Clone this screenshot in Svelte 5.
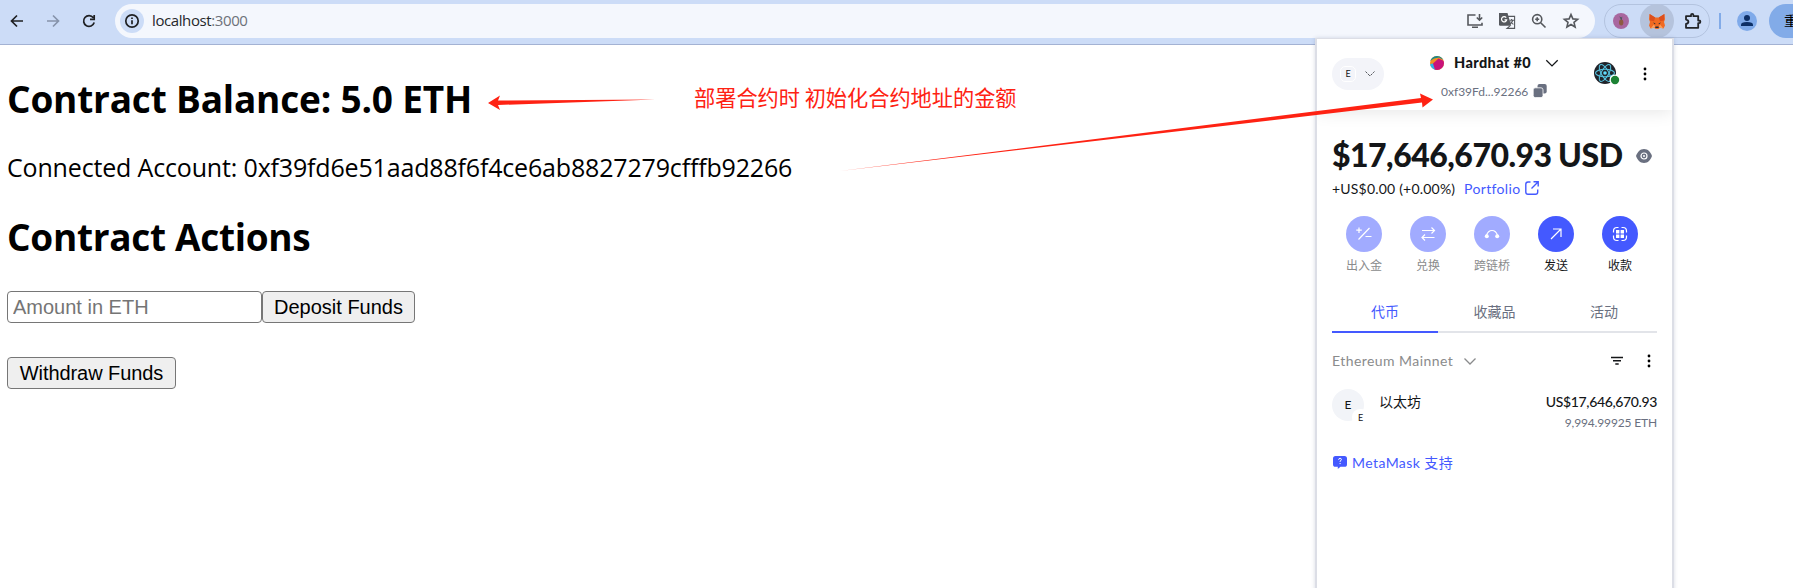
<script>
  const actions = [
    { id: 'fund', label: '出入金', off: true },
    { id: 'swap', label: '兑换', off: true },
    { id: 'bridge', label: '跨链桥', off: true },
    { id: 'send', label: '发送', off: false },
    { id: 'receive', label: '收款', off: false },
  ];
</script>

<div class="screen">
  <header class="toolbar">
    <div class="nav">
      <svg width="16" height="16" viewBox="0 0 16 16"><path d="M14 8H3M8 2.500L2.500 8 8 13.500" /></svg>
      <svg class="dim" width="16" height="16" viewBox="0 0 16 16"><path d="M2 8h11M8 2.500L13.500 8 8 13.500" /></svg>
      <svg width="16" height="16" viewBox="0 0 16 16"><path d="M13.200 9.600A5.400 5.400 0 1 1 12.300 4.700M13.200 2v4.300H9" /></svg>
    </div>
    <div class="omnibox">
      <span class="info"><svg width="16" height="16" viewBox="0 0 16 16"><circle cx="8" cy="8" r="6.200" /><path d="M8 7.300v4M8 4.600v1.500" /></svg></span>
      <span class="url">localhost<i>:3000</i></span>
      <div class="tools">
        <svg width="18" height="18" viewBox="0 0 18 18"><path d="M9.500 3H2v10h14v-2.200M6 15.200h6M13.500 2v6M10.800 5.500l2.700 2.700 2.700-2.700" /></svg>
        <svg width="18" height="18" viewBox="0 0 18 18"><path class="fill" d="M1 1h8.500l3.700 12.800H2.200Q1 13.800 1 12.600z" /><path class="thin" d="M10 4.400h6.600v12H9l3-2.600M11.500 8.200h4.600M13.600 7v1.200M15 8.200q-.8 2.400-3 3.600M12.600 9.500q1 1.800 2.800 2.900" /><path class="white" d="M8.200 5.700A2.600 2.600 0 1 0 8.700 7.800H6.500" /></svg>
        <svg width="18" height="18" viewBox="0 0 18 18"><circle cx="7.200" cy="7.200" r="4.600" /><path d="M10.700 10.700l4.800 4.800M7.200 5.200v4M5.200 7.200h4" /></svg>
        <svg width="18" height="18" viewBox="0 0 18 18"><path d="M9 2.600l1.900 4.300 4.700.4-3.600 3.100 1.100 4.600L9 12.500 4.900 15 6 10.400 2.400 7.300l4.700-.4z" /></svg>
      </div>
    </div>
    <div class="extensions">
      <svg class="pine" width="16" height="16" viewBox="0 0 16 16"><circle cx="8" cy="8" r="8" fill="#a8679f" /><ellipse cx="8.200" cy="9.600" rx="2.200" ry="3" fill="#8d5b42" /><path d="M8 7L6.300 3.200 8.200 4.600 9.300 3.400 8.800 7z" fill="#4d5a5e" /></svg>
      <span class="fox">
        <svg width="16" height="15" viewBox="0 0 16 15"><path d="M.6 0L6.200 3.600h3.600L15.400 0l.6 5.300-1 2.700 1 3.500-1.500 3-3.600-.8L9.400 15H6.600l-1.500-1.300-3.600.8-1.500-3L1 8 0 5.300z" fill="#f06a22" /><path d="M.6 0L6.200 3.600 5 7.200 1 6.500zM15.400 0L9.800 3.600 11 7.200l4-.7z" fill="#dd4f1c" /><path d="M1.600 14.500L5 10.500l1.300 2.800zM14.400 14.500L11 10.500l-1.300 2.800z" fill="#f9a25e" /><path d="M4 8.600l2.300.6-.2 1.300zM12 8.600l-2.300.6.2 1.300zM6.500 12.400h3l.3 1.700H6.200z" fill="#222b38" /></svg>
      </span>
      <svg class="puzzle" width="18" height="18" viewBox="0 0 18 18"><path d="M2 4.200h5V3.100a1.200 1.200 0 0 1 2.400 0v1.100h4.800v4.300h.9a1.300 1.300 0 0 1 0 2.600h-.9v4.700H2v-3.800q2.400-.4 2.400-2.200T2 7.600z" /></svg>
    </div>
    <span class="sep"></span>
    <svg class="person" width="20" height="20" viewBox="0 0 20 20"><circle cx="10" cy="10" r="10" fill="#7faaea" /><circle cx="10" cy="7" r="3" fill="#0d2f66" /><path d="M4 15v-1.300q0-2.700 6-2.700t6 2.700V15z" fill="#0d2f66" /></svg>
    <div class="relaunch">重</div>
  </header>

  <main>
    <h2>Contract Balance: 5.0 ETH</h2>
    <p class="account">Connected Account: 0xf39fd6e51aad88f6f4ce6ab8827279cfffb92266</p>
    <h2 class="second">Contract Actions</h2>
    <div class="row"><input placeholder="Amount in ETH" /><button class="deposit">Deposit Funds</button></div>
    <button class="withdraw">Withdraw Funds</button>
  </main>

  <section class="wallet">
    <div class="head">
      <div class="network"><span>E</span><svg width="12" height="12" viewBox="0 0 12 12"><path d="M1.500 3.500L6 8l4.500-4.500" /></svg></div>
      <div class="identity">
        <div class="name">
          <svg width="14" height="14" viewBox="0 0 14 14"><defs><clipPath id="disc"><circle cx="7" cy="7" r="7" /></clipPath></defs><g clip-path="url(#disc)"><rect width="14" height="14" fill="#f19222" /><path d="M0 0h14v4L9 1.500 4 2.500 0 5z" fill="#16888c" /><path d="M0 8l3.500-.5L6 14H0z" fill="#29b5e8" /><path d="M8.500 2.500L14 5v9H5L3 7.500z" fill="#c8137a" /></g></svg>
          <b>Hardhat #0</b>
          <svg class="chev" width="14" height="14" viewBox="0 0 14 14"><path d="M1.300 4.200L7 9.900l5.700-5.700" /></svg>
        </div>
        <div class="address"><span>0xf39Fd...92266</span><svg width="14" height="14" viewBox="0 0 14 14"><rect x="4.500" y="0" width="9.200" height="9.500" rx="2" fill="#6a7080" /><rect x=".2" y="3.800" width="9.800" height="9.800" rx="2" fill="#6a7080" stroke="#fff" stroke-width=".8" /></svg></div>
      </div>
      <svg class="react" width="26" height="24" viewBox="0 0 26 24"><circle cx="11" cy="11" r="11" fill="#20232a" /><g fill="none" stroke="#55bfdc" stroke-width="1.100"><ellipse cx="11" cy="11" rx="9.500" ry="3.700" /><ellipse cx="11" cy="11" rx="9.500" ry="3.700" transform="rotate(60 11 11)" /><ellipse cx="11" cy="11" rx="9.500" ry="3.700" transform="rotate(120 11 11)" /></g><circle cx="11" cy="11" r="1.800" fill="#61dafb" /><circle cx="21" cy="18" r="5.500" fill="#fff" /><circle cx="21" cy="18" r="4.200" fill="#1c8234" /></svg>
      <svg class="dots" width="4" height="14" viewBox="0 0 4 14"><circle cx="2" cy="2" r="1.400" /><circle cx="2" cy="7" r="1.400" /><circle cx="2" cy="12" r="1.400" /></svg>
    </div>

    <div class="balance"><strong>$17,646,670.93</strong><strong class="usd">USD</strong>
      <svg width="16" height="14" viewBox="0 0 16 14"><path d="M8 0C4 0 1.500 2.800 0 7c1.500 4.200 4 7 8 7s6.500-2.800 8-7C14.500 2.800 12 0 8 0z" fill="#6a7080" /><circle cx="8" cy="7" r="3" fill="none" stroke="#fff" stroke-width="1.200" /><circle cx="8" cy="7" r="1" fill="#fff" /></svg>
    </div>
    <div class="change"><span>+US$0.00 (+0.00%)</span><a href="#portfolio">Portfolio</a>
      <svg width="14" height="14" viewBox="0 0 14 14"><path d="M5.500 1H3Q.8 1 .8 3.200V11q0 2.200 2.200 2.200h7.500q2.200 0 2.200-2.200V8.500M8.500.8h4.700v4.700M13 1L6.500 7.500" /></svg>
    </div>

    <div class="actions">
      {#each actions as a}
        <div class="action" class:off={a.off}>
          <span>
            <svg width="18" height="18" viewBox="0 0 18 18">
              {#if a.id === 'fund'}<path d="M4 2.500v5.500M1.300 5.200h5.500M14.500 3l-11 11.500M10.500 11.500h6" />
              {:else if a.id === 'swap'}<path d="M3 5.500h12.500M12.500 2.500l3 3-3 3M15.500 12.500H3M6 9.500l-3 3 3 3" />
              {:else if a.id === 'bridge'}<path d="M3.500 10.500Q5 5.500 9 5.500t5.500 5" /><circle class="solid" cx="3.800" cy="11.300" r="2" /><circle class="solid" cx="14.200" cy="11.300" r="2" />
              {:else if a.id === 'send'}<path d="M4 14L13.500 4.500M6 4h8v8" />
              {:else}<path d="M7.500 2.500H6Q2.500 2.500 2.500 6v1.500M10.500 2.500H12q3.500 0 3.500 3.500v1.500M7.500 15.500H6q-3.500 0-3.500-3.500v-1.500M10.500 15.500H12q3.500 0 3.500-3.500v-1.500" /><path class="solid" d="M5 5h3.400v3.400H5zM9.600 5H13v3.400H9.600zM5 9.600h3.400V13H5zM9.600 9.600H13V13H9.600z" />{/if}
            </svg>
          </span>
          <em>{a.label}</em>
        </div>
      {/each}
    </div>

    <div class="tabs"><span class="active">代币</span><span class="mid">收藏品</span><span class="last">活动</span></div>

    <div class="filter">
      <span>Ethereum Mainnet</span>
      <svg class="chev" width="14" height="14" viewBox="0 0 14 14"><path d="M1.500 4.500L7 10l5.500-5.500" /></svg>
      <svg class="lines" width="12" height="10" viewBox="0 0 12 10"><path d="M0 1.500h12M2 4.800h8M4.300 8.100h3.400" /></svg>
      <svg class="dots" width="4" height="14" viewBox="0 0 4 14"><circle cx="2" cy="2" r="1.400" /><circle cx="2" cy="7" r="1.400" /><circle cx="2" cy="12" r="1.400" /></svg>
    </div>

    <div class="token">
      <div class="logo">E<i>E</i></div>
      <span class="title">以太坊</span>
      <div class="amount"><b>US$17,646,670.93</b><span>9,994.99925 ETH</span></div>
    </div>

    <div class="support">
      <svg width="14" height="13" viewBox="0 0 14 13"><path d="M2.500 0h9Q14 0 14 2.500v5.700Q14 10.800 11.500 10.800H7.500L4.800 13v-2.200H2.500Q0 10.800 0 8.200V2.500Q0 0 2.500 0z" fill="#4459ff" /><path d="M5.600 3.800q.2-1.500 1.500-1.500t1.300 1.300q0 .9-1.300 1.400v.8M7.100 7v1.100" fill="none" stroke="#fff" stroke-width="1" /></svg>
      <span>MetaMask 支持</span>
    </div>
  </section>

  <svg class="marks" width="1793" height="588" viewBox="0 0 1793 588">
    <path d="M488 103l12-7.500-2 5L655 99.500 498 105l2 5z" />
    <path d="M840 171L1421 98l-1-4.500 13 6-10.500 8-.5-5z" />
  </svg>
  <div class="note">部署合约时 初始化合约地址的金额</div>
</div>

<style>
  :global(body) { margin: 0; background: #fff; overflow: hidden; }
  .screen { position: relative; width: 1793px; height: 588px; overflow: hidden; font-family: "Open Sans", "Noto Sans CJK SC", sans-serif; color: #000; }
  svg { display: block; flex: none; }
  .toolbar { height: 45px; box-sizing: border-box; background: #ccdcf7; padding: 4px 0 6px 9px; display: flex; align-items: center; border-bottom: 1px solid #a3b2d3; }
  .toolbar > * { flex: none; }
  .nav { display: flex; gap: 20px; width: 106px; }
  .nav path, .info svg * { fill: none; stroke: #1f2023; stroke-width: 1.7; }
  .nav .dim path { stroke: #8693ab; }
  .omnibox { width: 1480px; height: 34px; box-sizing: border-box; border-radius: 17px; background: #f4f7fd; display: flex; align-items: center; padding: 0 15px 0 5px; }
  .info { width: 24px; height: 24px; border-radius: 50%; background: #ccdcf7; display: grid; place-items: center; }
  .url { margin-left: 8px; font-size: 15px; color: #26282b; letter-spacing: -.4px; line-height: 20px; margin-top: -2px; }
  .url i { font-style: normal; color: #6d7179; }
  .tools { margin-left: auto; display: flex; gap: 14px; }
  .tools path, .tools circle, .puzzle path { fill: none; stroke: #55585d; stroke-width: 1.6; }
  .tools .fill { fill: #55585d; stroke: none; }
  .tools .thin { stroke-width: 1.1; }
  .tools .white { stroke: #fff; stroke-width: 1.2; }
  .puzzle path { stroke: #222428; stroke-width: 1.8; stroke-linejoin: round; }
  .extensions { margin-left: 9px; width: 106px; height: 34px; box-sizing: border-box; border: 1px solid #b3c3df; border-radius: 17px; display: flex; align-items: center; padding-left: 8px; }
  .fox { flex: none; width: 34px; height: 34px; margin: 0 10px 0 11px; border-radius: 50%; background: #b5c3dc; display: grid; place-items: center; }
  .sep { width: 2px; height: 16px; background: #82abe8; margin-left: 9px; }
  .person { margin-left: 16px; }
  .relaunch { width: 24px; height: 34px; box-sizing: border-box; margin-left: 12px; border-radius: 17px 0 0 17px; background: #82abe8; padding-left: 15px; font-size: 14px; line-height: 34px; white-space: nowrap; overflow: hidden; }

  main { padding: 30px 0 0 7px; display: flex; flex-direction: column; align-items: flex-start; }
  h2 { margin: 0; font-size: 37px; line-height: 48px; font-weight: 700; white-space: nowrap; letter-spacing: -.19px; }
  .account { margin: 27px 0 0; font-size: 25px; line-height: 34px; white-space: nowrap; letter-spacing: -.165px; }
  h2.second { margin-top: 29px; letter-spacing: -.3px; }
  .row { margin-top: 30px; display: flex; }
  input, button { box-sizing: border-box; height: 32px; font: 20px/26px "Liberation Sans", sans-serif; border: 1px solid #767676; border-radius: 4px; padding: 0; color: #000; }
  input { width: 255px; padding-left: 5px; background: #fff; }
  input::placeholder { color: #757575; opacity: 1; }
  button { background: #efefef; text-align: center; }
  .deposit { width: 153px; }
  .withdraw { width: 169px; margin-top: 34px; letter-spacing: -.08px; }

  .wallet { position: absolute; left: 1315px; top: 38px; width: 359px; height: 560px; box-sizing: border-box; border: 1px solid #dcdee6; border-width: 1px 2px; background: #fff; box-shadow: 0 0 4px rgba(60, 70, 110, .2); font-family: Lato, "Noto Sans CJK SC", sans-serif; color: #141618; padding: 0 15px; }
  .head { margin: 0 -15px; height: 71px; padding: 0 20px 0 15px; display: flex; align-items: flex-start; box-shadow: 0 2px 16px rgba(0, 0, 0, .1); clip-path: inset(0 0 -30px 0); }
  .network { margin-top: 19px; width: 52px; height: 32px; border-radius: 16px; background: #f3f4f9; display: flex; align-items: center; gap: 8px; padding-left: 8px; box-sizing: border-box; }
  .network span { width: 16px; height: 16px; box-sizing: border-box; border: 1px solid #fff; border-radius: 5px; font-size: 9px; line-height: 14px; text-align: center; }
  .network path, .chev path { fill: none; stroke: #141618; stroke-width: 1.3; }
  .network path { stroke: #55585d; stroke-width: 1; stroke-dasharray: 2.600 1; }
  .identity { margin: 14px 0 0 46px; width: 130px; }
  .name { display: flex; align-items: center; height: 20px; }
  .name b { font-size: 14.5px; margin: -1px 0 0 10px; width: 91px; white-space: nowrap; font-weight: 900; letter-spacing: .38px; }
  .address { display: flex; align-items: center; height: 16px; margin: 10px 0 0 11px; font-size: 12px; color: #6a7080; }
  .address span { width: 92px; white-space: nowrap; }
  .react { margin: 23px 0 0 34px; }
  .head .dots { margin: 28px 0 0 23px; }
  .balance { display: flex; align-items: center; height: 40px; margin-top: 26px; font-size: 32px; }
  .balance strong { font-weight: 900; width: 226px; white-space: nowrap; letter-spacing: -.52px; margin-top: -3px; }
  .balance .usd { width: 78px; letter-spacing: -.4px; }
  .change { display: flex; align-items: center; height: 22px; margin-top: 1px; font-size: 14px; }
  .change span { width: 132px; white-space: nowrap; letter-spacing: .2px; }
  .change a { color: #4459ff; text-decoration: none; width: 61px; letter-spacing: .36px; }
  .change path { fill: none; stroke: #4459ff; stroke-width: 1.4; }
  .actions { display: flex; margin-top: 17px; height: 60px; }
  .action { width: 64px; display: flex; flex-direction: column; align-items: center; font-size: 12px; }
  .action span { width: 36px; height: 36px; border-radius: 50%; background: #4459ff; display: grid; place-items: center; }
  .action path, .action circle { fill: none; stroke: #fff; stroke-width: 1.2; }
  .action .solid { fill: #fff; stroke: none; }
  .action em { margin-top: 5px; line-height: 18px; font-style: normal; }
  .off span { background: #a1abff; }
  .off em { color: #8a8b8c; }
  .tabs { margin-top: 18px; height: 39px; display: flex; font-size: 14px; line-height: 36px; color: #6a7080; }
  .tabs span { box-sizing: border-box; height: 39px; border-bottom: 2px solid #e2e4e9; text-align: center; }
  .tabs .active { color: #4459ff; border-color: #4459ff; width: 106px; }
  .tabs .mid { width: 113px; }
  .tabs .last { width: 106px; }
  .filter { display: flex; align-items: center; height: 24px; margin-top: 16px; font-size: 14px; color: #8a8b8c; }
  .filter span { width: 131px; white-space: nowrap; letter-spacing: .44px; margin-top: -1px; }
  .filter .chev path { stroke: #8a8b8c; }
  .lines { margin-left: 134px; }
  .lines path { stroke: #141618; stroke-width: 1.5; }
  .filter .dots { margin-left: 24px; }
  .token { margin-top: 16px; height: 44px; display: flex; align-items: flex-start; }
  .logo { position: relative; width: 32px; height: 32px; border-radius: 50%; background: #f2f4f8; font-size: 12px; line-height: 32px; text-align: center; }
  .logo i { position: absolute; left: 20px; top: 20px; width: 17px; height: 17px; border-radius: 8px; background: #fff; font: 9px/17px Lato, sans-serif; }
  .title { margin-left: 15px; font-size: 14px; line-height: 26px; }
  .amount { margin-left: auto; text-align: right; display: flex; flex-direction: column; }
  .amount b { font-size: 14px; line-height: 26px; font-weight: 500; letter-spacing: -.36px; }
  .amount span { font-size: 12px; line-height: 16px; color: #6a7080; letter-spacing: -.15px; }
  .support { display: flex; align-items: center; gap: 5px; margin-top: 19px; padding-left: 1px; height: 20px; font-size: 14px; color: #4459ff; }
  .support span { letter-spacing: .42px; }

  .marks { position: absolute; left: 0; top: 0; pointer-events: none; }
  .marks path { fill: #fe2213; }
  .note { position: absolute; left: 694px; top: 80px; font-size: 21.2px; line-height: 34px; color: #fe2213; white-space: nowrap; font-family: "Noto Sans CJK SC", sans-serif; }
</style>
